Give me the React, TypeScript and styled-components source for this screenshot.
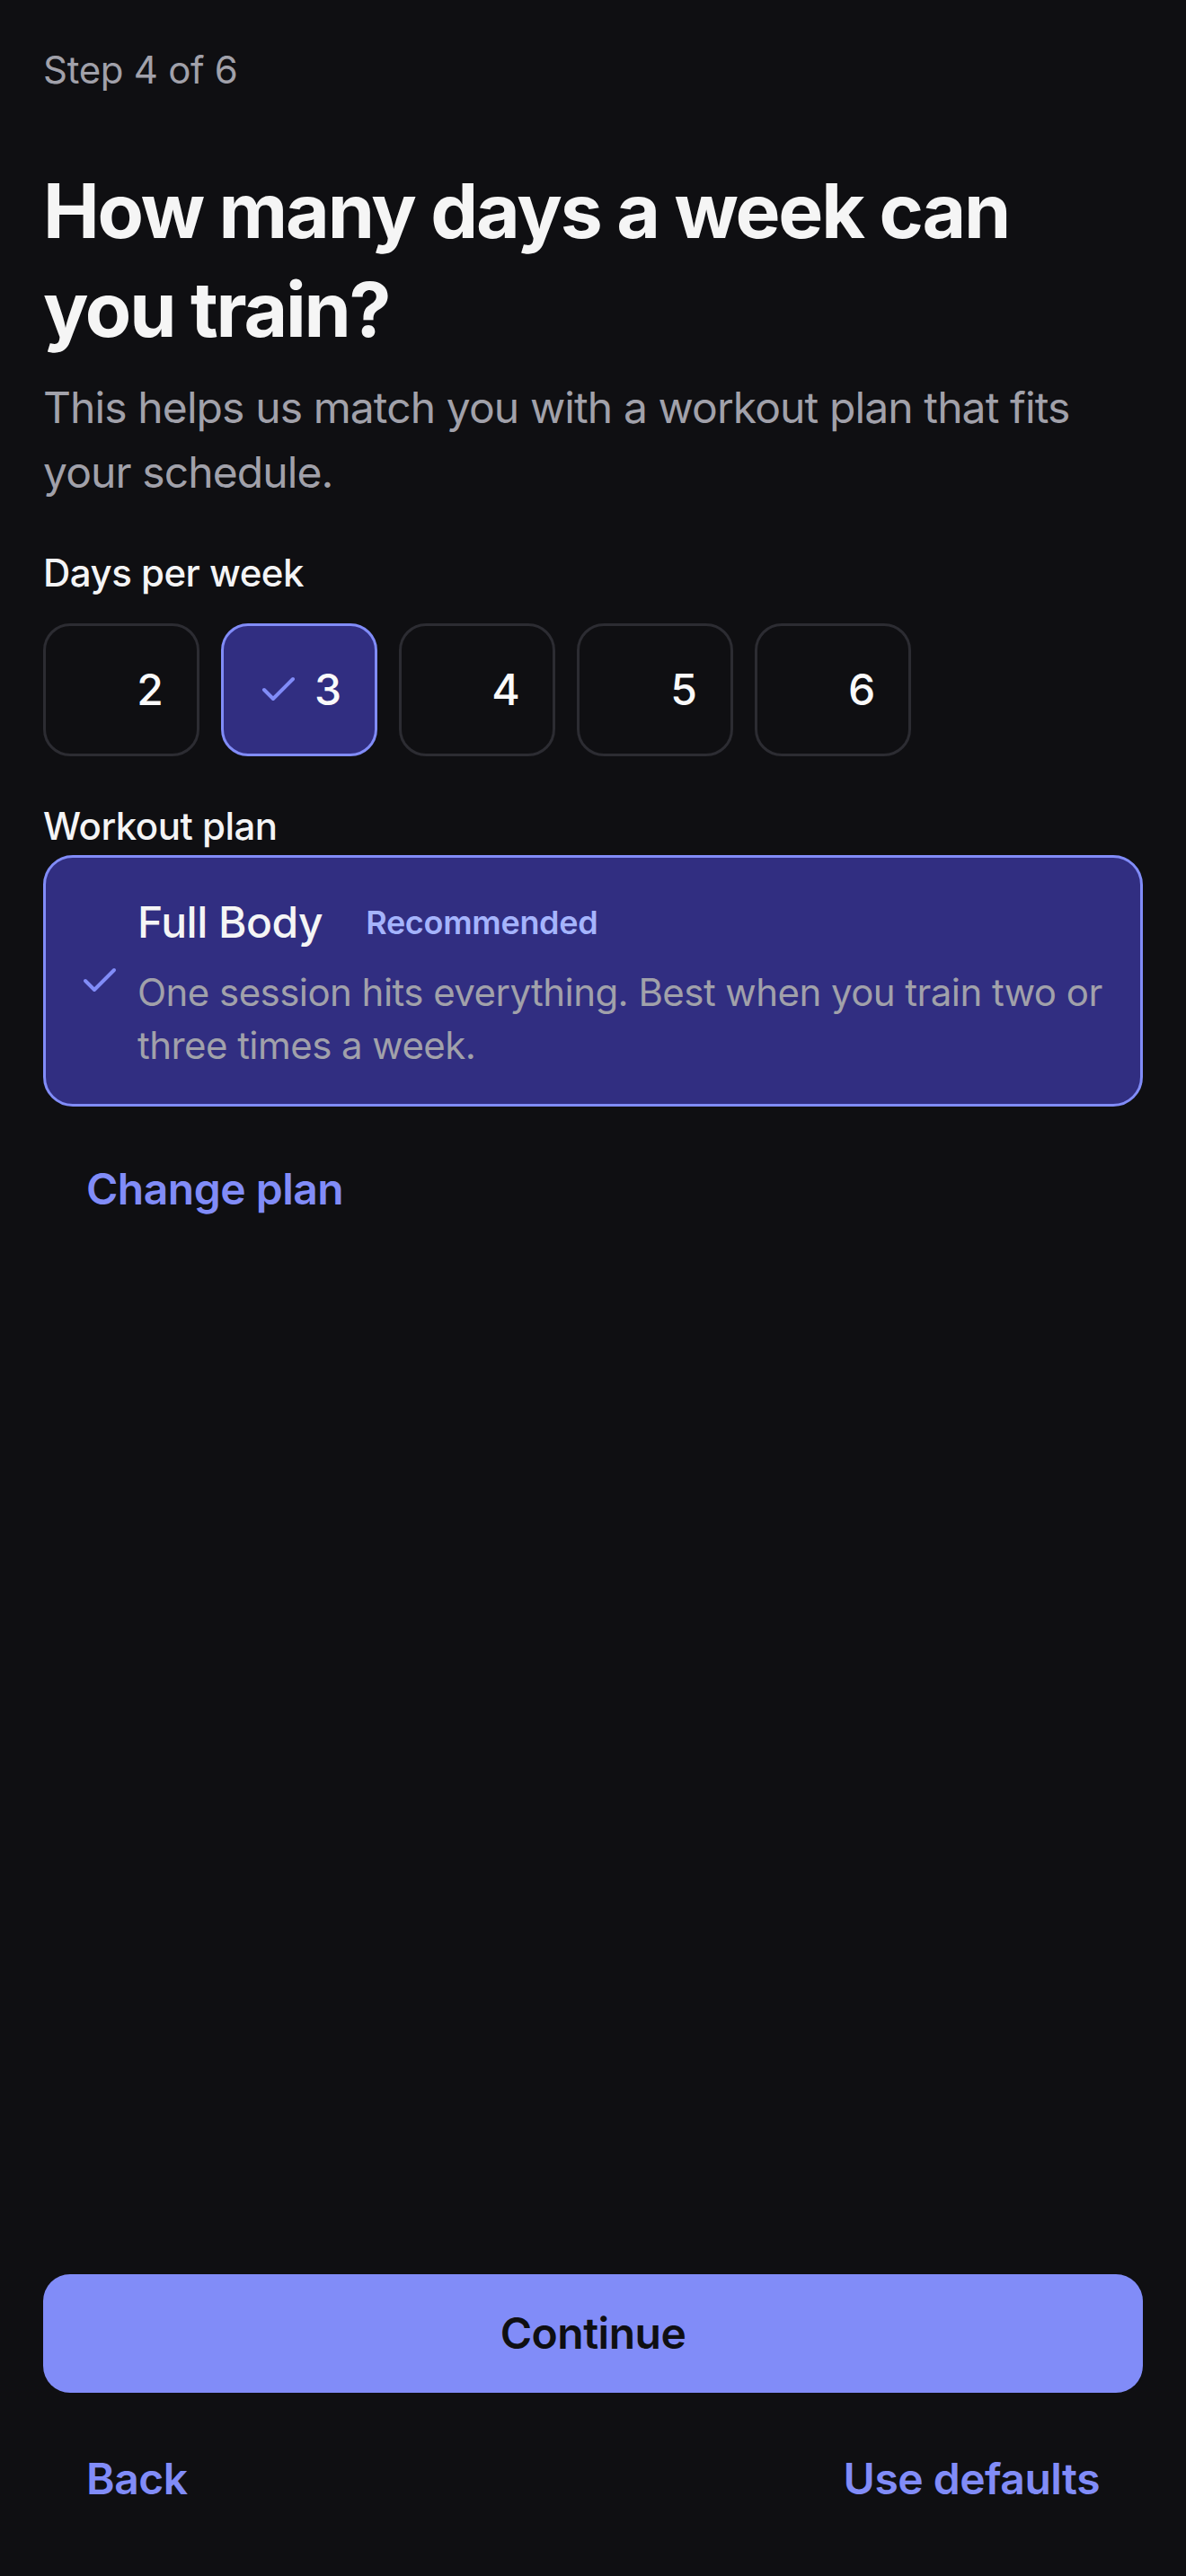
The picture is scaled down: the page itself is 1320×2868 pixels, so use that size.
import React, { useState } from "react";
import styled, { createGlobalStyle } from "styled-components";

const GlobalStyle = createGlobalStyle`
  * { box-sizing: border-box; }
  html, body { margin: 0; padding: 0; background: #0f0f12; }
  body { font-family: "Inter", "Noto Sans", "Liberation Sans", sans-serif; -webkit-font-smoothing: antialiased; }
  button { font-family: inherit; }
`;

const Page = styled.div`
  min-height: 100vh;
  display: flex;
  flex-direction: column;
  padding: 48px 48px 36px;
  background: #0f0f12;
  color: #f4f4f5;
`;

const Main = styled.main`
  display: flex;
  flex-direction: column;
`;

const StepLabel = styled.div`
  font-size: 42px;
  line-height: 60px;
  font-weight: 400;
  letter-spacing: -0.3px;
  color: #a1a1aa;
`;

const Title = styled.h1`
  margin: 72px 0 0;
  font-size: 84px;
  line-height: 110px;
  font-weight: 700;
  letter-spacing: -2.2px;
  color: #f5f5f5;
`;

const Subtitle = styled.p`
  margin: 18px 0 0;
  font-size: 48px;
  line-height: 72px;
  font-weight: 400;
  letter-spacing: -0.9px;
  color: #a1a1aa;
`;

const SectionLabel = styled.div<{ $top: number }>`
  margin-top: ${(p) => p.$top}px;
  font-size: 42px;
  line-height: 60px;
  font-weight: 500;
  letter-spacing: -0.5px;
  color: #f4f4f5;
`;

const DayRow = styled.div`
  margin-top: 26px;
  display: flex;
  gap: 24px;
`;

const DayButton = styled.button<{ $selected: boolean }>`
  width: 174px;
  height: 148px;
  border-radius: 30px;
  border: 3px solid ${(p) => (p.$selected ? "#818cf8" : "#2c2c32")};
  background: ${(p) => (p.$selected ? "#312e81" : "transparent")};
  color: #fafafa;
  display: flex;
  align-items: center;
  justify-content: center;
  gap: 16px;
  padding: 0;
  font-size: 48px;
  line-height: 72px;
  font-weight: 500;
  cursor: pointer;
`;

const CheckSlot = styled.span<{ $visible: boolean }>`
  display: flex;
  width: 48px;
  height: 48px;
  visibility: ${(p) => (p.$visible ? "visible" : "hidden")};
  color: #818cf8;
`;

const PlanCard = styled.div`
  margin-top: 2px;
  border-radius: 33px;
  border: 3px solid #818cf8;
  background: #312e81;
  padding: 36px;
  display: flex;
  align-items: center;
  gap: 18px;
`;

const PlanIcon = styled.span`
  flex: none;
  display: flex;
  width: 48px;
  height: 48px;
  color: #818cf8;
`;

const PlanBody = styled.div`
  display: flex;
  flex-direction: column;
  gap: 12px;
`;

const PlanHeader = styled.div`
  display: flex;
  align-items: center;
  gap: 48px;
`;

const PlanName = styled.span`
  font-size: 48px;
  line-height: 72px;
  font-weight: 500;
  letter-spacing: -0.5px;
  color: #f5f5f5;
`;

const Badge = styled.span`
  font-size: 36px;
  line-height: 48px;
  font-weight: 600;
  letter-spacing: -0.3px;
  color: #a5b4fc;
`;

const PlanDesc = styled.p`
  margin: 0;
  font-size: 42px;
  line-height: 59px;
  font-weight: 400;
  letter-spacing: -0.55px;
  color: #a1a1aa;
`;

const LinkButton = styled.button`
  background: none;
  border: none;
  padding: 36px 48px;
  font-size: 48px;
  line-height: 72px;
  font-weight: 600;
  letter-spacing: -0.5px;
  color: #818cf8;
  cursor: pointer;
`;

const ChangeButton = styled(LinkButton)`
  margin-top: 20px;
  align-self: flex-start;
`;

const Spacer = styled.div`
  flex: 1;
`;

const Footer = styled.footer`
  display: flex;
  flex-direction: column;
  gap: 24px;
`;

const PrimaryButton = styled.button`
  width: 100%;
  height: 132px;
  border: none;
  border-radius: 30px;
  background: #818cf8;
  color: #0f0f12;
  font-size: 48px;
  line-height: 72px;
  font-weight: 600;
  letter-spacing: -0.5px;
  cursor: pointer;
`;

const FooterRow = styled.div`
  display: flex;
  justify-content: space-between;
  align-items: center;
`;

const CheckIcon = () => (
  <svg width="48" height="48" viewBox="0 0 24 24" fill="none" stroke="currentColor" strokeWidth="2" strokeLinecap="round" strokeLinejoin="round">
    <path d="M20 6 9 17l-5-5" />
  </svg>
);

export default function App() {
  const [days, setDays] = useState(3);
  const options = [2, 3, 4, 5, 6];
  return (
    <>
      <GlobalStyle />
      <Page>
        <Main>
          <StepLabel>Step 4 of 6</StepLabel>
          <Title>How many days a week can you train?</Title>
          <Subtitle>This helps us match you with a workout plan that fits your schedule.</Subtitle>

          <SectionLabel $top={46}>Days per week</SectionLabel>
          <DayRow>
            {options.map((d) => (
              <DayButton key={d} $selected={d === days} onClick={() => setDays(d)}>
                <CheckSlot $visible={d === days}>
                  <CheckIcon />
                </CheckSlot>
                <span>{d}</span>
              </DayButton>
            ))}
          </DayRow>

          <SectionLabel $top={48}>Workout plan</SectionLabel>
          <PlanCard>
            <PlanIcon>
              <CheckIcon />
            </PlanIcon>
            <PlanBody>
              <PlanHeader>
                <PlanName>Full Body</PlanName>
                <Badge>Recommended</Badge>
              </PlanHeader>
              <PlanDesc>One session hits everything. Best when you train two or three times a week.</PlanDesc>
            </PlanBody>
          </PlanCard>
          <ChangeButton>Change plan</ChangeButton>
        </Main>
        <Spacer />
        <Footer>
          <PrimaryButton>Continue</PrimaryButton>
          <FooterRow>
            <LinkButton>Back</LinkButton>
            <LinkButton>Use defaults</LinkButton>
          </FooterRow>
        </Footer>
      </Page>
    </>
  );
}
